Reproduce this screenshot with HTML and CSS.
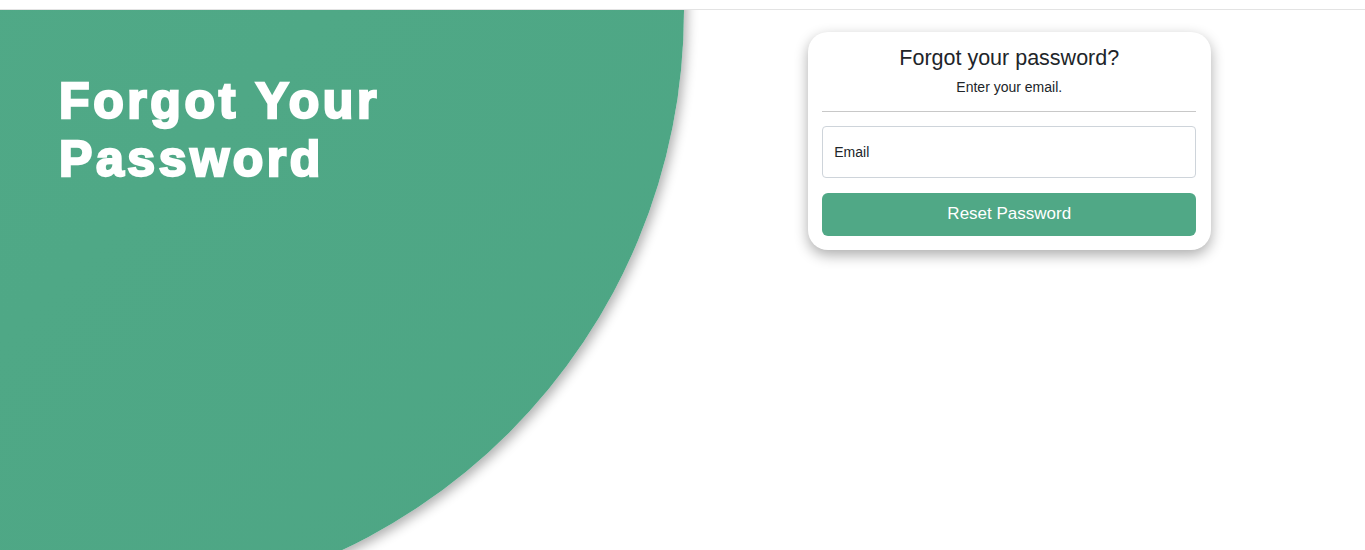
FILE: index.html
```html
<!DOCTYPE html>
<html lang="en">
<head>
<meta charset="utf-8">
<title>Forgot Your Password</title>
<link rel="stylesheet" href="styles.css">
</head>
<body>
<header class="topbar"></header>
<main class="page">
  <div class="blob"></div>
  <section class="hero">
    <h1 class="hero-title">Forgot Your<br>Password</h1>
  </section>
  <section class="side">
    <form class="card">
      <h2 class="card-title">Forgot your password?</h2>
      <p class="card-sub">Enter your email.</p>
      <hr class="card-rule">
      <input class="field" type="email" placeholder="Email">
      <button class="btn" type="button">Reset Password</button>
    </form>
  </section>
</main>
</body>
</html>
```

FILE: styles.css
```css
* { box-sizing: border-box; }

html, body {
  margin: 0;
  padding: 0;
  background: #ffffff;
  font-family: "Liberation Sans", Arial, sans-serif;
  color: #212529;
}

.topbar {
  height: 10px;
  border-bottom: 1px solid #e3e3e3;
  background: #ffffff;
}

.page {
  position: relative;
  height: 540px;
  overflow: hidden;
  display: grid;
  grid-template-columns: 1fr 1fr;
}

.blob {
  position: absolute;
  left: -508px;
  top: -595px;
  width: 1192px;
  height: 1192px;
  border-radius: 50%;
  background: linear-gradient(135deg, #53ab89 0%, #4fa886 60%, #4da584 100%);
  box-shadow: 3px 4px 12px rgba(0, 0, 0, 0.32);
  z-index: 0;
}

.hero {
  position: relative;
  z-index: 1;
  padding-left: 59px;
  padding-top: 62px;
}

.hero-title {
  margin: 0;
  font-family: "Liberation Sans", Arial, sans-serif;
  font-weight: 700;
  font-size: 50px;
  line-height: 58px;
  letter-spacing: 3.6px;
  color: #ffffff;
  -webkit-text-stroke: 2.4px #ffffff;
}

.side {
  position: relative;
  z-index: 1;
  display: flex;
  justify-content: center;
  align-items: flex-start;
  padding-top: 22px;
  padding-right: 28px;
}

.card {
  width: 403px;
  background: #ffffff;
  border-radius: 20px;
  padding: 14px 15px 14px 14px;
  box-shadow: 0 5px 14px rgba(0, 0, 0, 0.33);
  display: flex;
  flex-direction: column;
}

.card-title {
  margin: 0;
  font-size: 21.5px;
  font-weight: 400;
  line-height: 1.2;
  text-align: center;
  color: #212529;
}

.card-sub {
  margin: 5px 0 0;
  font-size: 14px;
  line-height: 21px;
  text-align: center;
  color: #212529;
}

.card-rule {
  margin: 13px 0 0;
  border: 0;
  border-top: 1px solid #c8c8c8;
  height: 0;
}

.field {
  margin-top: 14px;
  height: 52px;
  width: 100%;
  border: 1px solid #ced4da;
  border-radius: 4px;
  padding: 0 11px;
  font-family: "Liberation Sans", Arial, sans-serif;
  font-size: 14px;
  color: #212529;
  background: #ffffff;
  outline: none;
}

.field::placeholder {
  color: #212529;
  opacity: 1;
}

.btn {
  margin-top: 15px;
  height: 43px;
  width: 100%;
  border: 0;
  border-radius: 6px;
  background: #50a886;
  color: #ffffff;
  font-family: "Liberation Sans", Arial, sans-serif;
  font-size: 17px;
  cursor: pointer;
}
```
